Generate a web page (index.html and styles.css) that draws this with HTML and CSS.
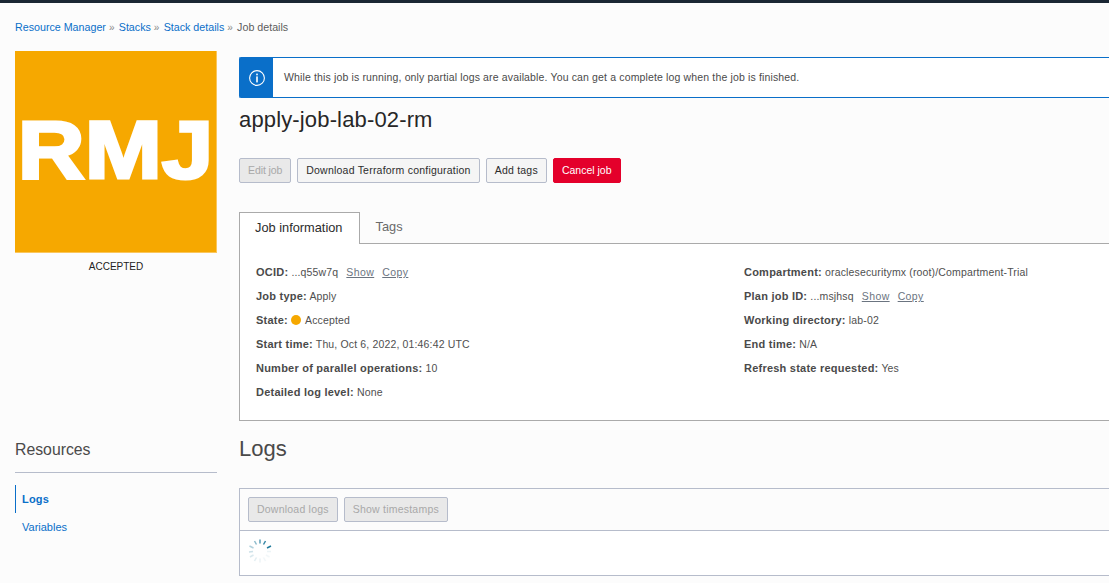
FILE: index.html
```html
<!DOCTYPE html>
<html lang="en">

<head>
    <meta charset="UTF-8">
    <title>Job details</title>
    <link rel="stylesheet" href="styles.css">
</head>

<body>
    <div class="top-bar"></div>
    <nav class="breadcrumbs">
        <a href="#">Resource Manager</a><span class="sep">&raquo;</span>
        <a href="#">Stacks</a><span class="sep">&raquo;</span>
        <a href="#">Stack details</a><span class="sep">&raquo;</span>
        <span class="current">Job details</span>
    </nav>
    <div class="page">
        <aside class="side">
            <div class="tile"><span>RMJ</span></div>
            <div class="tile-state">ACCEPTED</div>
            <h2 class="side-title">Resources</h2>
            <ul class="side-menu">
                <li class="active"><a href="#">Logs</a></li>
                <li><a href="#">Variables</a></li>
            </ul>
        </aside>
        <main class="main">
            <div class="banner">
                <div class="banner-icon">
                    <svg width="16" height="16" viewBox="0 0 16 16">
                        <circle cx="8" cy="8" r="7.4" fill="none" stroke="#fff" stroke-width="1.1" />
                        <rect x="7.2" y="3.6" width="1.6" height="1.7" fill="#fff" />
                        <rect x="7.2" y="6.4" width="1.6" height="6" fill="#fff" />
                    </svg>
                </div>
                <div class="banner-text">While this job is running, only partial logs are available. You can get a complete log when the job is finished.</div>
            </div>
            <h1 class="title">apply-job-lab-02-rm</h1>
            <div class="actions">
                <button class="btn btn-narrow" disabled>Edit job</button>
                <button class="btn">Download Terraform configuration</button>
                <button class="btn">Add tags</button>
                <button class="btn btn-danger">Cancel job</button>
            </div>
            <div class="tabs">
                <div class="tab selected">Job information</div>
                <div class="tab">Tags</div>
            </div>
            <section class="info">
                <div class="info-col">
                    <div class="row"><b>OCID:</b> ...q55w7q <a class="link first" href="#">Show</a><a class="link" href="#">Copy</a></div>
                    <div class="row"><b>Job type:</b> Apply</div>
                    <div class="row"><b>State:</b> <span class="dot"></span>Accepted</div>
                    <div class="row"><b>Start time:</b> Thu, Oct 6, 2022, 01:46:42 UTC</div>
                    <div class="row"><b>Number of parallel operations:</b> 10</div>
                    <div class="row"><b>Detailed log level:</b> None</div>
                </div>
                <div class="info-col">
                    <div class="row"><b>Compartment:</b> oraclesecuritymx (root)/Compartment-Trial</div>
                    <div class="row"><b>Plan job ID:</b> ...msjhsq <a class="link first" href="#">Show</a><a class="link" href="#">Copy</a></div>
                    <div class="row"><b>Working directory:</b> lab-02</div>
                    <div class="row"><b>End time:</b> N/A</div>
                    <div class="row"><b>Refresh state requested:</b> Yes</div>
                </div>
            </section>
            <h2 class="logs-title">Logs</h2>
            <section class="logs">
                <div class="logs-bar">
                    <button class="btn" disabled>Download logs</button>
                    <button class="btn" disabled>Show timestamps</button>
                </div>
                <div class="logs-body">
                    <svg width="26" height="26" viewBox="0 0 26 26" stroke="#1f7a9c" stroke-width="1.5">
                        <line x1="13" y1="1.5" x2="13" y2="5.5" opacity=".75" />
                        <line x1="18.5" y1="3" x2="16.5" y2="6.5" opacity=".9" />
                        <line x1="24" y1="8" x2="20" y2="10" opacity="1" />
                        <line x1="24" y1="13.5" x2="20" y2="13.5" opacity=".08" />
                        <line x1="22.5" y1="19" x2="19" y2="17" opacity=".05" />
                        <line x1="18.5" y1="23" x2="16.5" y2="19.5" opacity=".05" />
                        <line x1="13" y1="24.5" x2="13" y2="20.5" opacity=".08" />
                        <line x1="7.5" y1="23" x2="9.5" y2="19.5" opacity=".12" />
                        <line x1="3" y1="19" x2="6.5" y2="17" opacity=".16" />
                        <line x1="2" y1="14" x2="6" y2="13.5" opacity=".22" />
                        <line x1="2.5" y1="8" x2="6.5" y2="10" opacity=".35" />
                        <line x1="7.5" y1="3" x2="9.5" y2="6.5" opacity=".5" />
                    </svg>
                </div>
            </section>
        </main>
    </div>
</body>

</html>
```

FILE: styles.css
```css
* {
    box-sizing: border-box;
}

html,
body {
    height: 583px;
    overflow: hidden;
}

body {
    margin: 0;
    background: #fcfcfc;
    color: #3d3d3d;
    font-family: "Liberation Sans", Arial, sans-serif;
    font-size: 11px;
}

a {
    color: #0a6fc9;
    text-decoration: none;
}

.top-bar {
    height: 3px;
    background: #1b2734;
}

.breadcrumbs {
    height: 48px;
    padding: 18px 0 0 15px;
    font-size: 10.7px;
    line-height: 13px;
}

.breadcrumbs .sep {
    margin: 0 1.3px 0 3px;
    color: #888;
    font-size: 10px;
}

.breadcrumbs .current {
    color: #5c5c5c;
}

.page {
    display: flex;
    gap: 22px;
    padding-left: 15px;
}

.side {
    flex: none;
    width: 202px;
}

.tile {
    height: 202px;
    background: #f6a800;
    border-right: 1px solid #fac65c;
    border-bottom: 1px solid #fac65c;
    color: #fff;
    font-size: 82px;
    font-weight: bold;
    line-height: 198px;
    text-align: center;
    white-space: nowrap;
}

.tile span {
    display: inline-block;
    transform: scaleX(1.13);
    -webkit-text-stroke: 3px #fff;
}

.tile-state {
    margin-top: 7px;
    color: #222;
    font-size: 10px;
    line-height: 13px;
    text-align: center;
}

.side-title {
    margin: 167px 0 0;
    padding-bottom: 13px;
    border-bottom: 1px solid #b6bccb;
    color: #4a4a4a;
    font-size: 15.8px;
    font-weight: normal;
    line-height: 19px;
}

.side-menu {
    margin: 12px 0 0;
    padding: 0;
    list-style: none;
}

.side-menu li {
    height: 28px;
    padding-left: 7px;
    line-height: 28px;
}

.side-menu li.active {
    border-left: 1px solid #0a6fc9;
    padding-left: 6px;
    font-weight: bold;
    letter-spacing: 0.2px;
}

.main {
    flex: 1;
    min-width: 0;
    margin-top: 6px;
}

.banner {
    display: flex;
    height: 41px;
    background: #fff;
    border: 1px solid #0a6fc9;
    border-right: 0;
    border-radius: 2px 0 0 2px;
}

.banner-icon {
    display: flex;
    flex: none;
    align-items: center;
    justify-content: center;
    width: 33px;
    background: #0a6fc9;
}

.banner-text {
    padding-left: 11px;
    color: #4a4a4a;
    font-size: 10.5px;
    line-height: 39px;
    letter-spacing: 0.145px;
}

.title {
    margin: 9px 0 0;
    color: #272727;
    font-size: 22px;
    font-weight: normal;
    line-height: 26px;
    letter-spacing: 0.15px;
}

.actions {
    display: flex;
    gap: 6px;
    margin-top: 25px;
}

.btn {
    height: 25px;
    padding: 0 8px 2px;
    background: #f5f5f5;
    border: 1px solid #b6bccb;
    border-radius: 2px;
    color: #2c2c2c;
    font-family: inherit;
    font-size: 10.5px;
    letter-spacing: 0.22px;
}

.btn-narrow {
    letter-spacing: -0.1px;
}

.btn:disabled {
    background: #e9e9e9;
    color: #a8a8a8;
}

.btn-danger {
    background: #e4002b;
    border-color: #e4002b;
    color: #fff;
    letter-spacing: 0;
}

.tabs {
    display: flex;
    height: 32px;
    margin-top: 29px;
    border-bottom: 1px solid #aaa;
}

.tab {
    height: 31px;
    padding: 0 16px;
    color: #6a6a6a;
    font-size: 12.8px;
    line-height: 30px;
}

.tab.selected {
    height: 32px;
    padding: 0 16px 0 15px;
    background: #fff;
    border: 1px solid #aaa;
    border-bottom: 0;
    color: #2c2c2c;
}

.info {
    display: flex;
    height: 177px;
    padding: 16px 0 0 16px;
    background: #fff;
    border-left: 1px solid #aaa;
    border-bottom: 1px solid #aaa;
}

.info-col {
    flex: none;
    width: 488px;
}

.info-col + .info-col {
    flex: 1;
    width: auto;
    min-width: 0;
}

.row {
    height: 24px;
    line-height: 24px;
    color: #4f4f4f;
    font-size: 10.5px;
    letter-spacing: 0.15px;
}

.row b {
    color: #4a4a4a;
    font-size: 11px;
    letter-spacing: 0.23px;
}

.link {
    margin-left: 8px;
    color: #6b7480;
    text-decoration: underline;
    letter-spacing: 0.4px;
}

.link.first {
    margin-left: 5px;
}

.dot {
    display: inline-block;
    width: 10px;
    height: 10px;
    margin: 0 4px 0 0;
    vertical-align: -1px;
    background: #f6a800;
    border-radius: 50%;
}

.logs-title {
    margin: 15px 0 0;
    color: #4a4a4a;
    font-size: 22px;
    font-weight: normal;
    line-height: 26px;
}

.logs {
    height: 88px;
    margin-top: 26px;
    background: #fff;
    border: 1px solid #b6bccb;
    border-right: 0;
}

.logs-bar {
    display: flex;
    gap: 6px;
    height: 42px;
    padding: 8px;
    background: #fcfcfc;
    border-bottom: 1px solid #b6bccb;
}

.logs-body {
    padding: 7px;
}

.logs-body svg {
    display: block;
}
```
